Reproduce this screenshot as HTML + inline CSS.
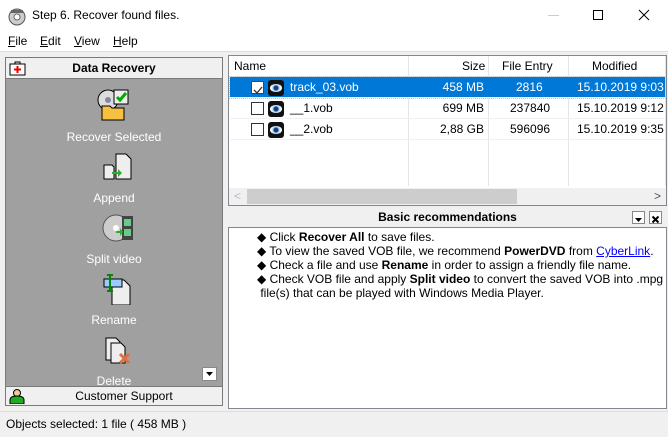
<!DOCTYPE html>
<html><head><meta charset="utf-8"><style>
*{box-sizing:border-box;margin:0;padding:0}
body{width:668px;height:437px;overflow:hidden;background:#f0f0f0;font-family:"Liberation Sans",sans-serif;font-size:12px;color:#000;position:relative;white-space:nowrap}
.a{position:absolute}
.title{left:0;top:0;width:668px;height:32px;background:#fff}
.menu{left:0;top:32px;width:668px;height:19px;background:#fff}
.menu span{position:absolute;top:2px}
.lp{left:5px;top:57px;width:218px;height:349px;border:1px solid #7a7a7a;background:#a0a0a0}
.lh{left:0;top:0;width:216px;height:21px;background:#f0f0f0;border-bottom:1px solid #7a7a7a;font-weight:bold;text-align:center;line-height:20px;font-size:12px}
.it{position:absolute;left:0;width:216px;text-align:center;color:#fff;font-size:12px}
.list{left:228px;top:55px;width:439px;height:151px;border:1px solid #828790;background:#fff}
.col{position:absolute;top:0;height:130px;border-left:1px solid #e5e5e5}
.row{position:absolute;left:1px;width:435px;height:21px;line-height:21px;border-bottom:1px solid #f0f0f0}
.sel{background:#0078d7;color:#fff;outline:1px dotted #f0c080}
.cb{position:absolute;left:21px;top:4px;width:13px;height:13px;border:1px solid #333;background:#fff}
.eye{position:absolute;left:38px;top:3px;width:16px;height:16px;background:#111;border-radius:3px}
.eye:after{content:"";position:absolute;left:2px;top:4px;width:12px;height:8px;border-radius:50%;background:radial-gradient(circle,#1a3c70 2px,#9fd0ff 3px,#fff 5px)}
.rec{left:228px;top:227px;width:439px;height:182px;border:1px solid #828790;background:#fff}
li{list-style:none;line-height:14px}
</style></head><body>
<div class="a title">
<svg class="a" style="left:7px;top:6px" width="20" height="20"><circle cx="10" cy="11" r="8" fill="#ccc" stroke="#555"/><circle cx="10" cy="11" r="3" fill="#fff" stroke="#666"/><path d="M4 4h12v3H4z" fill="#666"/></svg>
<span class="a" style="left:32px;top:8px;font-size:12px">Step 6. Recover found files.</span>
<div class="a" style="left:548px;top:15px;width:11px;height:1px;background:#ccc"></div>
<div class="a" style="left:593px;top:10px;width:10px;height:10px;border:1px solid #000"></div>
<svg class="a" style="left:638px;top:9px" width="12" height="12"><path d="M1 1L11 11M11 1L1 11" stroke="#000" stroke-width="1"/></svg>
</div>
<div class="a menu"><span style="left:8px"><u>F</u>ile</span><span style="left:40px"><u>E</u>dit</span><span style="left:74px"><u>V</u>iew</span><span style="left:113px"><u>H</u>elp</span></div>
<div class="a" style="left:0;top:51px;width:668px;height:1px;background:#ddd"></div>

<div class="a lp">
<div class="a lh">Data Recovery
<svg class="a" style="left:3px;top:3px" width="17" height="15"><rect x="1" y="3" width="15" height="11" fill="#fff" stroke="#000"/><rect x="6" y="1" width="5" height="2" fill="none" stroke="#000"/><path d="M8.5 5v7M5 8.5h7" stroke="#e00" stroke-width="2"/></svg></div>
<svg class="a" style="left:90px;top:30px" width="34" height="34"><circle cx="12" cy="12" r="10" fill="#ddd" stroke="#000"/><circle cx="12" cy="12" r="3" fill="#889"/><rect x="18" y="2" width="14" height="14" fill="#eee" stroke="#000"/><path d="M21 9l3 3 6-7" stroke="#0a0" stroke-width="3" fill="none"/><path d="M6 18h8l2 2h12v12H6z" fill="#f8c040" stroke="#000"/></svg>
<div class="it" style="top:72px">Recover Selected</div>
<svg class="a" style="left:96px;top:95px" width="32" height="28"><path d="M2 12h8l2 2v12H2z" fill="#eee" stroke="#000"/><path d="M14 1h10l5 5v20H14z" fill="#eee" stroke="#000"/><path d="M10 19h6v-3l4 4-4 4v-3h-6z" fill="#3a3"/></svg>
<div class="it" style="top:133px">Append</div>
<svg class="a" style="left:96px;top:155px" width="32" height="30"><circle cx="14" cy="15" r="13" fill="#ccc" stroke="#555"/><circle cx="14" cy="15" r="3" fill="#fff"/><rect x="20" y="3" width="11" height="24" fill="#444"/><rect x="22" y="6" width="7" height="7" fill="#6c8"/><rect x="22" y="16" width="7" height="7" fill="#6c8"/><path d="M14 18h4v-3l3 4-3 4v-3h-4z" fill="#3a3"/></svg>
<div class="it" style="top:194px">Split video</div>
<svg class="a" style="left:96px;top:215px" width="32" height="32"><path d="M10 7h12l6 6v19H10z" fill="#eee" stroke="#000"/><rect x="2" y="6" width="18" height="8" fill="#9cf" stroke="#000"/><path d="M8 2v16M5 2h6M5 18h6" stroke="#080" stroke-width="2"/></svg>
<div class="it" style="top:255px">Rename</div>
<svg class="a" style="left:96px;top:276px" width="32" height="32"><path d="M4 4h10l4 4v18H4z" fill="#eee" stroke="#000"/><path d="M9 9h10l4 4v16H9z" fill="#eee" stroke="#000"/><path d="M18 20l9 9M27 20l-9 9" stroke="#e07040" stroke-width="3"/></svg>
<div class="it" style="top:316px">Delete</div>
<div class="a" style="left:196px;top:309px;width:15px;height:14px;background:#fff;border:1px solid #888"><svg width="13" height="12"><path d="M3 4h7l-3.5 4z"/></svg></div>
<div class="a" style="left:0;top:328px;width:216px;height:19px;background:#f0f0f0;border-top:1px solid #7a7a7a;text-align:center;line-height:18px;padding-left:20px">Customer Support
<svg class="a" style="left:3px;top:1px" width="16" height="16"><circle cx="8" cy="5" r="3.5" fill="#ec9" stroke="#000"/><path d="M1 16v-4c0-3 3-4 7-4s7 1 7 4v4z" fill="#2a2" stroke="#000"/></svg></div>
</div>

<div class="a list">
<div class="a" style="left:0;top:0;width:437px;height:21px;border-bottom:1px solid #e5e5e5;line-height:21px">
<span class="a" style="left:5px">Name</span><span class="a" style="left:233px">Size</span><span class="a" style="left:273px">File Entry</span><span class="a" style="left:363px">Modified</span></div>
<div class="col" style="left:179px"></div><div class="col" style="left:259px"></div><div class="col" style="left:339px"></div><div class="col" style="left:436px"></div>
<div class="row sel" style="top:21px"><div class="cb" style="border-color:#444"><svg width="11" height="11"><path d="M2 5l3 3 5-6" stroke="#333" fill="none" stroke-width="1.3"/></svg></div><div class="eye"></div><span class="a" style="left:60px">track_03.vob</span><span class="a" style="right:181px">458 MB</span><span class="a" style="left:286px">2816</span><span class="a" style="left:347px">15.10.2019 9:03</span></div>
<div class="row" style="top:42px"><div class="cb"></div><div class="eye"></div><span class="a" style="left:60px">__1.vob</span><span class="a" style="right:181px">699 MB</span><span class="a" style="left:280px">237840</span><span class="a" style="left:347px">15.10.2019 9:12</span></div>
<div class="row" style="top:63px"><div class="cb"></div><div class="eye"></div><span class="a" style="left:60px">__2.vob</span><span class="a" style="right:181px">2,88 GB</span><span class="a" style="left:280px">596096</span><span class="a" style="left:347px">15.10.2019 9:35</span></div>
<div class="a" style="left:0;top:132px;width:437px;height:17px;background:#f0f0f0"><div class="a" style="left:18px;top:1px;width:270px;height:15px;background:#cdcdcd"></div><span class="a" style="left:5px;top:1px;color:#bbb">&lt;</span><span class="a" style="left:425px;top:1px;color:#555">&gt;</span></div>
</div>

<div class="a" style="left:228px;top:208px;width:439px;height:19px;text-align:center;font-weight:bold;line-height:19px">Basic recommendations
<div class="a" style="left:404px;top:3px;width:13px;height:13px;border:1px solid #888;background:#fff"><svg width="11" height="11"><path d="M2 4h7l-3.5 4z"/></svg></div>
<div class="a" style="left:421px;top:3px;width:13px;height:13px;border:1px solid #888;background:#fff"><svg width="11" height="11"><path d="M2.5 2.5l6 6M8.5 2.5l-6 6" stroke="#000" stroke-width="2"/></svg></div></div>
<div class="a rec"><ul style="padding:2px 0 0 28px">
<li>◆ Click <b>Recover All</b> to save files.</li>
<li>◆ To view the saved VOB file, we recommend <b>PowerDVD</b> from <u style="color:#00f">CyberLink</u>.</li>
<li>◆ Check a file and use <b>Rename</b> in order to assign a friendly file name.</li>
<li>◆ Check VOB file and apply <b>Split video</b> to convert the saved VOB into .mpg<br>&nbsp;file(s) that can be played with Windows Media Player.</li></ul></div>
<div class="a" style="left:0;top:411px;width:668px;height:1px;background:#ddd"></div>
<span class="a" style="left:6px;top:417px">Objects selected: 1 file ( 458 MB )</span>
</body></html>
